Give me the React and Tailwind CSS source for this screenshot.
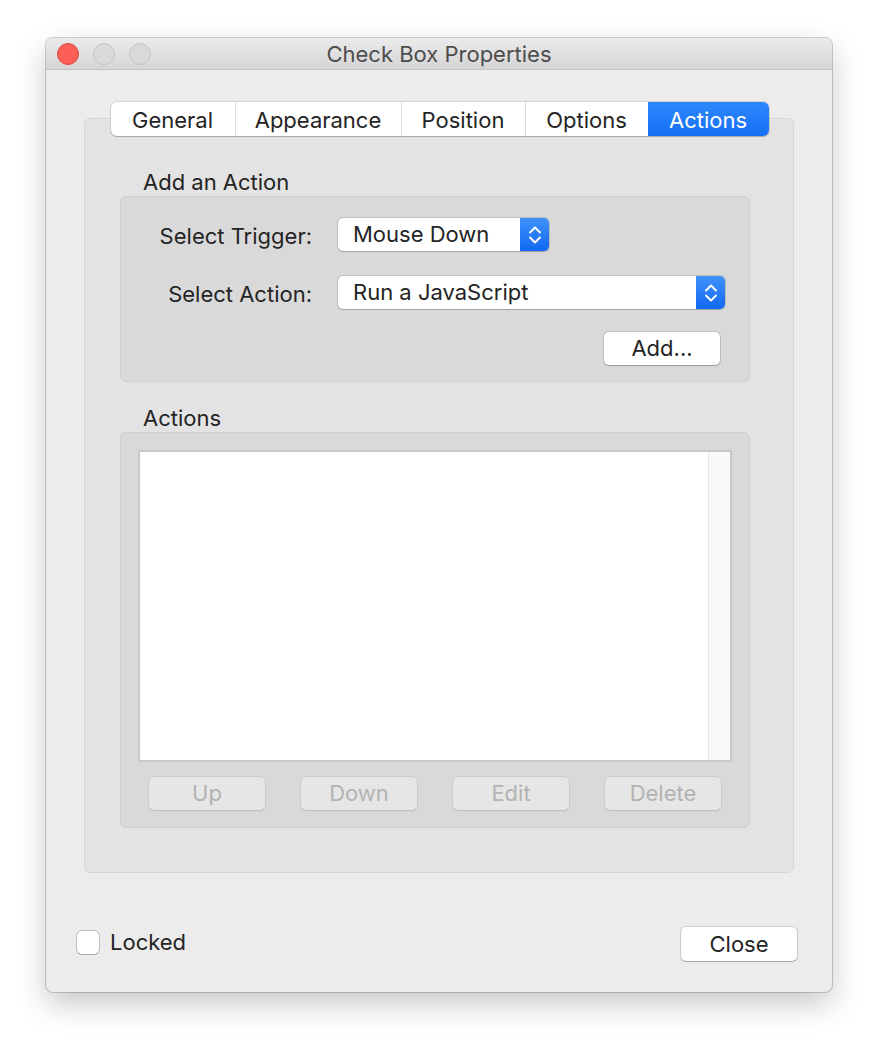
import React from 'react';

const font = { fontFamily: 'Inter, "Noto Sans", sans-serif' };

// Up/down chevrons used by the popup buttons
const Chevrons = () => (
  <svg width="14" height="20" viewBox="0 0 14 20" fill="none" stroke="white" strokeWidth="1.9" strokeLinecap="round" strokeLinejoin="round">
    <path d="M2 7.5 L7 2.5 L12 7.5" />
    <path d="M2 12.5 L7 17.5 L12 12.5" />
  </svg>
);

const PopUp = ({ label, width }) => (
  <div className={`flex h-[33px] rounded-[5px] bg-white shadow-[0_0_0_1px_rgba(0,0,0,0.12),0_1px_1px_rgba(0,0,0,0.15)] overflow-hidden ${width}`}>
    <div className="flex-1 flex items-center pl-[15px] text-[22px] text-[#242424]">{label}</div>
    <div className="w-[29px] flex items-center justify-center bg-gradient-to-b from-[#3f91fa] to-[#0f68f3]">
      <Chevrons />
    </div>
  </div>
);

const PushButton = ({ children, disabled, className = '' }) => (
  <div
    className={`flex items-center justify-center h-[33px] w-[116px] rounded-[5px] text-[22px] ${
      disabled
        ? 'bg-[#e6e6e6] text-[#b3b3b3] shadow-[0_0_0_1px_rgba(0,0,0,0.06),0_1px_1px_rgba(0,0,0,0.08)]'
        : 'bg-white text-[#242424] shadow-[0_0_0_1px_rgba(0,0,0,0.12),0_1px_1px_rgba(0,0,0,0.18)]'
    } ${className}`}
  >
    {children}
  </div>
);

const tabs = [
  { name: 'General', w: 'w-[124px]' },
  { name: 'Appearance', w: 'w-[166px]' },
  { name: 'Position', w: 'w-[124px]' },
  { name: 'Options', w: 'w-[123px]' },
  { name: 'Actions', w: 'w-[121px]', active: true },
];

export default function App() {
  return (
    <div className="min-h-[1046px] bg-white pt-[38px]" style={font}>
      <div className="mx-auto w-[786px] h-[954px] rounded-[7px] bg-[#ececec] overflow-hidden shadow-[0_0_0_1px_rgba(0,0,0,0.18),0_12px_30px_rgba(0,0,0,0.22)] flex flex-col">
        {/* title bar */}
        <div className="relative h-[32px] flex items-center bg-gradient-to-b from-[#ebebeb] to-[#d5d5d5] border-b border-[#c4c4c4]">
          <div className="flex items-center gap-[14px] pl-[11px]">
            <span className="w-[22px] h-[22px] rounded-full bg-[#fc5f57] border border-[#e0443e]" />
            <span className="w-[22px] h-[22px] rounded-full bg-[#d9d9d9] border border-[#c3c3c3]" />
            <span className="w-[22px] h-[22px] rounded-full bg-[#d9d9d9] border border-[#c3c3c3]" />
          </div>
          <div className="absolute inset-0 flex items-center justify-center pt-[2px] text-[22px] text-[#4d4d4d] pointer-events-none">
            Check Box Properties
          </div>
        </div>

        {/* body */}
        <div className="flex-1 flex flex-col pt-[32px]">
          <div className="relative z-10 flex justify-center pl-[1px]">
            <div className="flex h-[34px] rounded-[6px] bg-white shadow-[0_0_0_1px_rgba(0,0,0,0.1),0_1px_1px_rgba(0,0,0,0.18)] overflow-hidden">
              {tabs.map((t, i) => (
                <div
                  key={t.name}
                  className={`${t.w} flex items-center justify-center pt-[2px] text-[22px] ${
                    t.active
                      ? 'bg-gradient-to-b from-[#2d87fb] to-[#1570f6] text-white'
                      : 'text-[#242424]'
                  } ${i > 0 && !t.active ? 'border-l border-[#dcdcdc]' : ''}`}
                >
                  {t.name}
                </div>
              ))}
            </div>
          </div>

          <div className="mx-[38px] -mt-[18px] h-[755px] rounded-[6px] bg-[#e3e3e3] border border-[#d6d6d6] pl-[35px] pt-[51px]">
            {/* Add an Action */}
            <div className="pl-[23px] h-[24px] leading-[24px] text-[22px] text-[#242424]">Add an Action</div>
            <div className="mt-[2px] w-[630px] h-[186px] rounded-[6px] bg-[#d9d9d9] border border-[#d0d0d0] pt-[21px] pr-[24px]">
              <div className="flex items-center h-[33px]">
                <div className="w-[192px] pr-[1px] h-[33px] leading-[36px] text-right text-[22px] text-[#242424]">Select Trigger:</div>
                <div className="ml-[25px]">
                  <PopUp label="Mouse Down" width="w-[211px]" />
                </div>
              </div>
              <div className="flex items-center h-[33px] mt-[25px]">
                <div className="w-[192px] pr-[1px] h-[33px] leading-[36px] text-right text-[22px] text-[#242424]">Select Action:</div>
                <div className="ml-[25px] flex-1">
                  <PopUp label="Run a JavaScript" width="w-full" />
                </div>
              </div>
              <div className="flex justify-end mt-[23px] pr-[5px]">
                <PushButton className="w-[115px]">Add...</PushButton>
              </div>
            </div>

            {/* Actions list */}
            <div className="mt-[24px] pl-[23px] h-[24px] leading-[24px] text-[22px] text-[#242424]">Actions</div>
            <div className="mt-[2px] w-[630px] h-[396px] rounded-[6px] bg-[#d9d9d9] border border-[#d0d0d0] pt-[17px] px-[17px]">
              <div className="h-[312px] bg-white border-2 border-[#c8c8c8] flex justify-end">
                <div className="w-[22px] bg-[#f9f9f9] border-l border-[#e6e6e6]" />
              </div>
              <div className="flex justify-between px-[11px] mt-[15px]">
                <PushButton disabled>Up</PushButton>
                <PushButton disabled>Down</PushButton>
                <PushButton disabled>Edit</PushButton>
                <PushButton disabled>Delete</PushButton>
              </div>
            </div>
          </div>

          {/* footer */}
          <div className="flex items-center justify-between pl-[31px] pr-[35px] mt-[54px]">
            <div className="flex items-center gap-[11px] -mt-[3px]">
              <span className="w-[22px] h-[23px] rounded-[5px] bg-white shadow-[0_0_0_1px_rgba(0,0,0,0.2),0_1px_1px_rgba(0,0,0,0.1)]" />
              <span className="text-[22px] text-[#242424]">Locked</span>
            </div>
            <PushButton className="w-[115px] h-[34px]">Close</PushButton>
          </div>
        </div>
      </div>
    </div>
  );
}
